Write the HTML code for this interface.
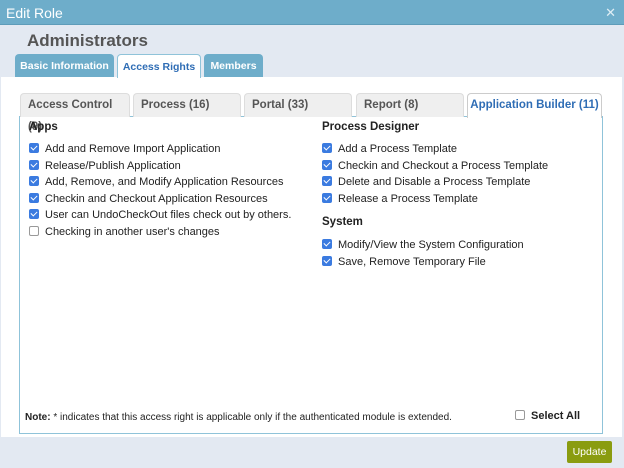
<!DOCTYPE html><html><head><style>
*{margin:0;padding:0;box-sizing:border-box}
body{width:624px;height:468px;position:relative;overflow:hidden;font-family:"Liberation Sans",sans-serif;background:#e3e9f2}
.abs{position:absolute}
.title{left:0;top:0;width:624px;height:25px;background:#6eadca;border-bottom:1px solid #5e9cb9;color:#fff;font-size:14px;padding:5px 6px}
.x{right:8px;top:5px;color:#dfeef5;font-size:13px}
.tab{top:54px;height:23px;background:#6eadca;color:#fff;font-weight:bold;font-size:10.5px;text-align:center;line-height:24px;border-radius:4px 4px 0 0}
.tab.on{background:#fff;color:#2f6db5;border:1px solid #8fc3d9;border-bottom:none;height:24px}
.main{left:1px;top:77px;width:621px;height:360px;background:#fff}
.itab{top:93px;height:24px;background:#efefef;border:1px solid #ddd;border-bottom:none;color:#555;font-weight:bold;font-size:11.5px;padding-left:7px;line-height:22px;border-radius:4px 4px 0 0}
.itab.on{background:#fff;color:#2f6db5;border-color:#ccc;text-align:center;padding:0;height:25px;z-index:2}
.box{left:19px;top:116px;width:584px;height:318px;border:1px solid #8fc3d9}
.h{font-weight:bold;font-size:11.5px;color:#222}
.it{font-size:11px;color:#222;height:16.5px;line-height:16px;white-space:nowrap}
.cb{display:inline-block;width:10px;height:10px;border-radius:2px;background:#3b7be0;vertical-align:-1px;margin-right:6px;position:relative}
.cb:after{content:"";position:absolute;left:3px;top:1px;width:3px;height:5px;border:solid #fff;border-width:0 1.5px 1.5px 0;transform:rotate(45deg)}
.cb.off{background:#fff;border:1px solid #999}
.cb.off:after{display:none}
</style></head><body>
<div class="abs title">Edit Role</div><div class="abs x">✕</div>
<div class="abs" style="left:27px;top:31px;font-size:17px;font-weight:bold;color:#555">Administrators</div>
<div class="abs main"></div>
<div class="abs tab" style="left:15px;width:99px">Basic Information</div>
<div class="abs tab on" style="left:117px;width:84px">Access Rights</div>
<div class="abs tab" style="left:204px;width:59px">Members</div>
<div class="abs box"></div>
<div class="abs itab" style="left:20px;width:110px">Access Control (9)</div>
<div class="abs itab" style="left:133px;width:108px">Process (16)</div>
<div class="abs itab" style="left:244px;width:108px">Portal (33)</div>
<div class="abs itab" style="left:356px;width:108px">Report (8)</div>
<div class="abs itab on" style="left:467px;width:135px">Application Builder (11)</div>
<div class="abs" style="left:29px;top:121px">
<div class="h" style="height:20px">Apps</div>
<div class="it"><span class="cb"></span>Add and Remove Import Application</div>
<div class="it"><span class="cb"></span>Release/Publish Application</div>
<div class="it"><span class="cb"></span>Add, Remove, and Modify Application Resources</div>
<div class="it"><span class="cb"></span>Checkin and Checkout Application Resources</div>
<div class="it"><span class="cb"></span>User can UndoCheckOut files check out by others.</div>
<div class="it"><span class="cb off"></span>Checking in another user's changes</div>
</div>
<div class="abs" style="left:322px;top:121px">
<div class="h" style="height:20px">Process Designer</div>
<div class="it"><span class="cb"></span>Add a Process Template</div>
<div class="it"><span class="cb"></span>Checkin and Checkout a Process Template</div>
<div class="it"><span class="cb"></span>Delete and Disable a Process Template</div>
<div class="it"><span class="cb"></span>Release a Process Template</div>
<div class="h" style="height:21px;margin-top:9px">System</div>
<div class="it"><span class="cb"></span>Modify/View the System Configuration</div>
<div class="it"><span class="cb"></span>Save, Remove Temporary File</div>
</div>
<div class="abs" style="left:25px;top:412px;font-size:10px;color:#222"><b>Note:</b> * indicates that this access right is applicable only if the authenticated module is extended.</div>
<div class="abs" style="left:515px;top:410px;font-size:11px;font-weight:bold;color:#222"><span class="cb off"></span>Select All</div>
<div class="abs" style="left:567px;top:441px;width:45px;height:22px;background:#8a9c10;border-radius:2px;color:#fff;font-size:10.5px;text-align:center;line-height:22px">Update</div>
</body></html>
